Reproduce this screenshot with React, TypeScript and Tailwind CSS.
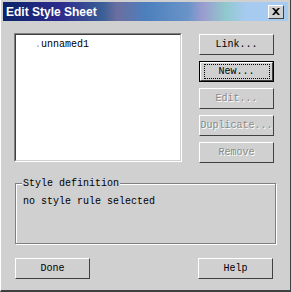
const buttons = [
  { label: 'Link...', disabled: false, focus: false },
  { label: 'New...', disabled: false, focus: true },
  { label: 'Edit...', disabled: true, focus: false },
  { label: 'Duplicate...', disabled: true, focus: false },
  { label: 'Remove', disabled: true, focus: false },
]

function Btn({ label, disabled, focus }: { label: string; disabled?: boolean; focus?: boolean }) {
  return (
    <div className={`h-[21px] w-[75px] ${focus ? 'border border-black' : ''}`}>
      <div className="h-full w-full border-t border-l border-white border-r border-b border-r-[#404040] border-b-[#404040] flex items-center justify-center">
        <div
          className={`px-1 leading-[13px] ${focus ? 'outline outline-1 outline-dotted outline-black w-[64px] text-center' : ''} ${
            disabled ? 'text-[#8a8a8a] [text-shadow:1px_1px_0_#ffffff]' : 'text-black'
          }`}
        >
          {label}
        </div>
      </div>
    </div>
  )
}

export default function App() {
  return (
    <div
      className="w-[291px] h-[292px] bg-[#d0d0d0] border-b-2 border-r border-b-[#404040] border-r-[#404040] border-l border-l-white flex flex-col text-[10px]"
      style={{ fontFamily: '"Liberation Mono", monospace' }}
    >
      {/* Title bar */}
      <div className="h-[19px] mx-[2px] mt-[2px] flex items-center justify-between pl-[3px] pr-[4px] bg-[linear-gradient(90deg,#0a246a_0%,#2d2a8c_20%,#3b5f96_35%,#6b6ea0_40%,#4c7fbd_50%,#6a94c8_65%,#9a9ccf_70%,#90c8cc_78%,#a6caf0_85%,#a6caf0_100%)]">
        <span className="text-white font-bold text-[12px]" style={{ fontFamily: '"Liberation Sans", Arial, sans-serif' }}>
          Edit Style Sheet
        </span>
        <div className="w-[16px] h-[14px] bg-[#d0d0d0] border-t border-l border-white border-r border-b border-r-[#404040] border-b-[#404040] flex items-center justify-center">
          <svg width="8" height="7" viewBox="0 0 8 7">
            <path d="M0 0h2l2 2 2-2h2L5 3.5 8 7H6L4 5 2 7H0l3-3.5z" fill="#000" />
          </svg>
        </div>
      </div>

      <div className="flex gap-[17px] pl-[13px] pt-[12px]">
        {/* List box */}
        <div className="w-[168px] h-[129px] border-t border-l border-[#808080] border-r border-b border-r-white border-b-white">
          <div className="h-full w-full border-t border-l border-[#404040] border-r border-b border-r-[#d0d0d0] border-b-[#d0d0d0] bg-white pl-[19px] pt-[2px]">
            <span className="text-[#999]">.</span>
            <span className="text-black">unnamed1</span>
          </div>
        </div>

        {/* Buttons */}
        <div className="flex flex-col gap-[6px] pt-[1px]">
          {buttons.map((b) => (
            <Btn key={b.label} {...b} />
          ))}
        </div>
      </div>

      {/* Group box */}
      <div className="relative mx-[14px] mt-[20px] h-[61px] border border-[#808080] shadow-[1px_1px_0_#ffffff,inset_1px_1px_0_#ffffff]">
        <span className="absolute -top-[7px] left-[6px] bg-[#d0d0d0] px-[1px] leading-[13px] text-black">Style definition</span>
        <div className="pl-[7px] pt-[10px] text-black">no style rule selected</div>
      </div>

      {/* Bottom buttons */}
      <div className="flex justify-between pl-[14px] pr-[17px] mt-[14px]">
        <Btn label="Done" />
        <Btn label="Help" />
      </div>
    </div>
  )
}
